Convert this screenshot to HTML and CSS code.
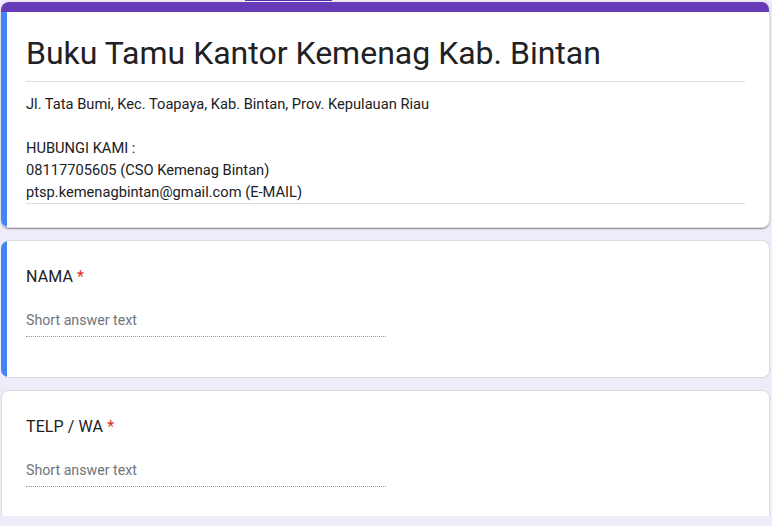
FILE: index.html
```html
<!DOCTYPE html>
<html lang="id">
<head>
<meta charset="utf-8">
<title>Buku Tamu Kantor Kemenag Kab. Bintan</title>
<link rel="stylesheet" href="styles.css">
</head>
<body>
<div class="page">
  <div class="tabstrip"><div class="tab-indicator"></div></div>
  <div class="cards">
    <section class="card header-card">
      <div class="header-top"></div>
      <div class="card-row">
        <div class="accent"></div>
        <div class="card-content">
          <h1 class="form-title">Buku Tamu Kantor Kemenag Kab. Bintan</h1>
          <div class="form-desc">
            <div>Jl. Tata Bumi, Kec. Toapaya, Kab. Bintan, Prov. Kepulauan Riau</div>
            <div>&nbsp;</div>
            <div>HUBUNGI KAMI :</div>
            <div>08117705605 (CSO Kemenag Bintan)</div>
            <div>ptsp.kemenagbintan@gmail.com (E-MAIL)</div>
          </div>
        </div>
      </div>
    </section>

    <section class="card question-card focused">
      <div class="card-row">
        <div class="accent"></div>
        <div class="card-content">
          <div class="q-title">NAMA <span class="req">*</span></div>
          <div class="short-answer"><span class="placeholder">Short answer text</span></div>
        </div>
      </div>
    </section>

    <section class="card question-card">
      <div class="card-row">
        <div class="card-content">
          <div class="q-title">TELP / WA <span class="req">*</span></div>
          <div class="short-answer"><span class="placeholder">Short answer text</span></div>
        </div>
      </div>
    </section>
  </div>
</div>
</body>
</html>
```

FILE: styles.css
```css
html, body {
  margin: 0;
  padding: 0;
  background: #f0ebf8;
}

body {
  font-family: Roboto, "Liberation Sans", Arial, sans-serif;
  color: #202124;
}

.page {
  height: 516px;
  overflow: hidden;
}

.tabstrip {
  height: 2px;
}

.tab-indicator {
  margin-left: 245px;
  width: 87px;
  height: 1px;
  background: #5b34a8;
}

.cards {
  display: flex;
  flex-direction: column;
  gap: 12px;
  margin: 0 2px 0 1px;
}

.card {
  background: #fff;
  border: 1px solid #dadce0;
  border-radius: 8px;
  overflow: hidden;
}

.header-card {
  border-top: none;
  border-left: none;
  box-shadow: 0 2px 1px -1px rgba(0,0,0,.2), 0 1px 1px 0 rgba(0,0,0,.14), 0 1px 3px 0 rgba(0,0,0,.12);
}

.header-top {
  height: 10px;
  background: #673ab7;
}

.card-row {
  display: flex;
}

.accent {
  width: 6px;
  flex: none;
  background: #4285f4;
}

.focused {
  border-left: none;
}

.card-content {
  flex: 1;
  padding: 24px 24px 24px 24px;
}

.header-card .card-content,
.focused .card-content {
  padding-left: 19px;
}

.header-card .card-content {
  padding-top: 21px;
  padding-bottom: 23px;
}

.form-title {
  margin: 0;
  font-size: 32px;
  font-weight: 400;
  line-height: 40px;
  padding-bottom: 8px;
  border-bottom: 1px solid #dadce0;
  color: #202124;
}

.form-desc {
  margin-top: 11px;
  font-size: 14.67px;
  line-height: 22px;
  border-bottom: 1px solid #dadce0;
}

.q-title {
  font-size: 16px;
  line-height: 24px;
  letter-spacing: .1px;
}

.req {
  color: #d93025;
}

.short-answer {
  margin-top: 21px;
  width: 50%;
  padding-bottom: 6px;
  border-bottom: 1px dotted #9e9e9e;
  margin-bottom: 15px;
}

.focused .short-answer {
  margin-bottom: 16px;
}

.placeholder {
  font-size: 14.2px;
  line-height: 20px;
  display: block;
  color: #70757a;
}
```
